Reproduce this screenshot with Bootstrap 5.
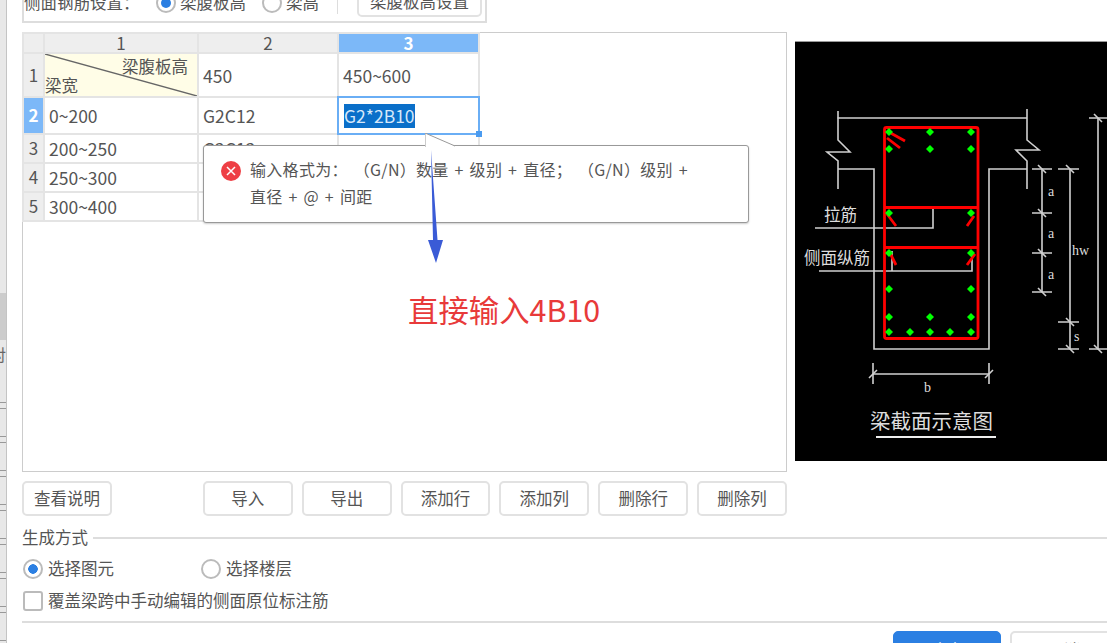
<!DOCTYPE html>
<html lang="zh">
<head>
  <meta charset="UTF-8">
  <title>侧面钢筋设置</title>
  <link rel="stylesheet" href="https://cdn.jsdelivr.net/npm/bootstrap@5.3.0/dist/css/bootstrap.min.css">
  <style>
    html, body { height: 100%; overflow: hidden; background: #fff; }
    body { font-family: "Noto Sans CJK SC", "Noto Sans", sans-serif; font-size: 16.5px; color: #555; line-height: 1.2; }
    .page-shell { width: 1107px; height: 643px; position: relative; overflow: hidden; }

    .side-strip { flex: none; width: 7px; height: 643px; overflow: hidden; border-right: 1px solid #c4c4c4; padding-top: 345px; font-size: 16px; text-indent: -10px; color: #666;
      background:
        linear-gradient(#ccc, #ccc) 0 293px / 100% 47px no-repeat,
        repeating-linear-gradient(transparent 0 27px, #999 27px 28px, transparent 28px 33px, #999 33px 34px) 0 375px / 100% 268px no-repeat,
        #e8e8e8; }
    .dialog-body { flex: none; width: 1100px; padding-left: 15px; }

    .top-bar { width: 465px; height: 23px; border: 2px solid #ddd; border-top: 0; overflow: hidden; align-items: flex-end; padding-bottom: 8px; position: relative; }
    .top-bar .top-label { width: 132px; flex: none; }
    .top-opt { flex: none; white-space: nowrap; }
    .top-sep { flex: none; width: 1px; height: 30px; background: #ddd; margin: 0 0 -1px 18px; }
    .top-btn { flex: none; height: 32px; width: 125px; margin: 0 0 -4px 19px; padding: 0; font-size: 16.5px; color: #555; border: 2px solid #e2e2e2; border-radius: 5px; background: #fff; }

    .main-row { margin-top: 9px; height: 440px; }
    .grid-box { flex: none; width: 765px; height: 440px; border: 1px solid #ccc; }
    .rebar-grid { width: 457px; margin: -1px 0 0 -1px; table-layout: fixed; border-collapse: collapse; font-size: 17.5px; }
    .rebar-grid th, .rebar-grid td { border: 2px solid #e4e4e4; padding: 0 0 0 4px; font-weight: 400; vertical-align: middle; color: #555; white-space: nowrap; overflow: hidden; }
    .rebar-grid thead th { background: #eee; text-align: center; height: 20px; padding: 0; font-size: 17px; line-height: 16px; }
    .rebar-grid tbody th { background: #eee; text-align: center; padding: 0; font-size: 17px; }
    .rebar-grid .is-active { background: #7cb8f8; color: #fff; font-weight: 700; }
    .rebar-grid .row-h { height: 44px; }
    .rebar-grid .row-edit { height: 37px; }
    .rebar-grid .row-n { height: 29px; }
    .corner-cell { position: relative; background: #fffde7; }
    .rebar-grid td.corner-cell { padding: 0; background: #fffde7; }
    .corner-cell svg { position: absolute; inset: 0; width: 100%; height: 100%; }
    .corner-top { position: absolute; right: 9px; top: 2px; font-size: 16.5px; line-height: 20px; }
    .corner-bottom { position: absolute; left: 0; bottom: 1px; font-size: 16.5px; line-height: 20px; }
    .rebar-grid td.edit-cell { padding-left: 5px; position: relative; overflow: visible; outline: 2px solid #6aaef5; outline-offset: -1px; }
    .edit-sel { display: inline-block; background: #0a6fc9; color: #d6e8fa; height: 24px; line-height: 24px; vertical-align: middle; }
    .edit-handle { position: absolute; right: -4px; bottom: -4px; width: 6px; height: 6px; background: #4a9bf0; }

    .diagram { width: 312px; height: 420px; margin: 9px 0 0 8px; background: #000; border-top: 1px solid #999; flex: none; }
    .diagram svg { display: block; width: 312px; height: 420px; }
    .diagram text { font-family: "Noto Sans CJK SC", sans-serif; fill: #ddd; }
    .diagram .dim-label { font-family: "Liberation Serif", serif; font-size: 14px; }

    .btn-row { width: 765px; margin-top: 9px; }
    .tool-btn { width: 90px; height: 35px; padding: 0; font-size: 16.5px; color: #555; background: #fff; border: 2px solid #e2e2e2; border-radius: 5px; }
    .tool-btn.push-gap { margin-left: 91px; }
    .tool-btn.next-btn { margin-left: 9px; }

    .gen-head { margin-top: 12px; height: 20px; }
    .gen-head hr, .end-line { flex: 1; margin: 0; border: 0; border-top: 2px solid #ddd; opacity: 1; }
    .gen-head hr { margin-left: 5px; }
    .opt-row { margin-top: 10px; height: 22px; padding-left: 1px; }
    .opt-row .form-check { margin: 0; padding: 0; min-height: 0; display: flex; align-items: center; gap: 5px; }
    .opt-row .form-check-input { margin: 0; float: none; width: 20px; height: 20px; border: 2px solid #bbb; flex: none; }
    .opt-row .form-check-input:checked[type=radio] { background-color: #fff; border-color: #bbb; background-image: radial-gradient(circle, #2b7fe2 0 4.5px, transparent 5px); }
    .opt-row .form-check-label { font-size: 16.5px; color: #555; }
    .opt-first { width: 178px; }
    .check-row { margin-top: 10px; }
    .check-row .form-check-input { border-radius: 3px; }
    .end-line { margin-top: 9px; height: 0; }
    .foot-btns { margin: 8px 0 0 871px; gap: 9px; }
    .ok-btn, .no-btn { flex: none; width: 108px; height: 34px; padding: 4px 0 0; font-size: 16.5px; border-radius: 5px; }
    .ok-btn { background: #2b7fe2; border-color: #2b7fe2; color: #fff; }
    .no-btn { background: #fff; border: 2px solid #e2e2e2; color: #555; }

    .err-tip { position: absolute; left: 203px; top: 145px; width: 546px; height: 78px; background: #fff; border: 1px solid #999; border-radius: 3px; box-shadow: 0 1px 2px rgba(0,0,0,.2); padding: 11px 40px 0 17px; font-size: 16px; line-height: 27px; }
    .err-icon { flex: none; width: 20px; height: 20px; margin: 4px 9px 0 0; }
    .err-msg { word-spacing: 2px; letter-spacing: .3px; margin-top: -1px; }
    .tip-tail { position: absolute; left: 425px; top: 133px; width: 32px; height: 14px; z-index: 2; }
    .note-arrow { position: absolute; left: 424px; top: 148px; width: 24px; height: 118px; z-index: 3; }
    .note-text { position: absolute; left: 408px; top: 291px; font-size: 30.4px; color: #e83a3a; line-height: 36px; }
  </style>
</head>
<body>
  <div class="page-shell d-flex">
    <div class="side-strip">对</div>
    <div class="dialog-body">
      <!-- 顶部设置条 -->
      <div class="top-bar d-flex">
        <span class="top-label">侧面钢筋设置：</span>
        <div class="top-opt d-flex align-items-center gap-1">
          <svg width="20" height="20" viewBox="0 0 20 20"><circle cx="10" cy="10" r="9" fill="#fff" stroke="#bbb" stroke-width="2"/><circle cx="10" cy="10" r="5" fill="#2b7fe2"/></svg>
          <span>梁腹板高</span>
        </div>
        <div class="top-opt d-flex align-items-center gap-1 ms-3">
          <svg width="20" height="20" viewBox="0 0 20 20"><circle cx="10" cy="10" r="9" fill="#fff" stroke="#bbb" stroke-width="2"/></svg>
          <span>梁高</span>
        </div>
        <span class="top-sep"></span>
        <button type="button" class="btn top-btn">梁腹板高设置</button>
      </div>

      <div class="main-row d-flex">
        <div class="grid-box bg-white">
          <table class="rebar-grid">
            <colgroup><col style="width:21px"><col style="width:154px"><col style="width:140px"><col style="width:141px"></colgroup>
            <thead>
              <tr><th></th><th>1</th><th>2</th><th class="is-active">3</th></tr>
            </thead>
            <tbody>
              <tr class="row-h">
                <th>1</th>
                <td class="corner-cell">
                  <svg viewBox="0 0 154 44" preserveAspectRatio="none"><line x1="0" y1="0" x2="154" y2="44" stroke="#666" stroke-width="1.4"/></svg>
                  <span class="corner-top">梁腹板高</span><span class="corner-bottom">梁宽</span>
                </td>
                <td>450</td>
                <td>450~600</td>
              </tr>
              <tr class="row-edit">
                <th class="is-active">2</th>
                <td>0~200</td>
                <td>G2C12</td>
                <td class="edit-cell"><span class="edit-sel">G2*2B10</span><span class="edit-handle"></span></td>
              </tr>
              <tr class="row-n"><th>3</th><td>200~250</td><td>G2C12</td><td></td></tr>
              <tr class="row-n"><th>4</th><td>250~300</td><td></td><td></td></tr>
              <tr class="row-n"><th>5</th><td>300~400</td><td></td><td></td></tr>
            </tbody>
          </table>
        </div>

        <!-- 截面示意图 -->
        <div class="diagram">
          <svg viewBox="795 41 312 420">
            <g fill="none" stroke="#d0d0d0" stroke-width="1.6">
              <path d="M837.5 117H1027"/>
              <path d="M838 110V139L850 151H827L838 160V188"/>
              <path d="M1027 108V139L1039 149H1016L1027 160V188"/>
              <path d="M838 168H874V348H989V168H1027"/>
              <path d="M815 227H933V206"/>
              <path d="M819 270H972V252M892 250V270"/>
              <path d="M1042 168V291M1032 168H1052M1032 212H1052M1032 252H1052M1032 291H1052"/>
              <path d="M1070 168V348M1058 168H1079M1058 321H1079M1058 348H1079"/>
              <path d="M1098 117V348M1089 117H1107M1089 348H1107"/>
              <path d="M873 373H989M873 362V383M989 362V383"/>
              <path d="M1038 164L1046 172M1038 208L1046 216M1038 248L1046 256M1038 287L1046 295M1066 164L1074 172M1066 317L1074 325M1066 344L1074 352M1094 113L1102 121M1094 344L1102 352M869 377L877 369M985 377L993 369"/>
            </g>
            <path d="M876 436H996" stroke="#eee" stroke-width="2"/>
            <g fill="none" stroke="#f00" stroke-width="2.8">
              <rect x="884.5" y="126.5" width="93.5" height="211" rx="2"/>
              <path d="M884 206.5H978M884 246.5H978"/>
              <path d="M887 130L905 140M887 137L900 147M887 213L896 225M974 215L967 225M890 252L896 264M975 253L967 264"/>
            </g>
            <g fill="#0f0" id="bar-dots"></g>
            <text x="824" y="220" font-size="16.5">拉筋</text>
            <text x="804" y="263" font-size="16.5">侧面纵筋</text>
            <text x="870" y="428" font-size="20.5">梁截面示意图</text>
            <text class="dim-label" x="1048" y="195">a</text>
            <text class="dim-label" x="1048" y="237">a</text>
            <text class="dim-label" x="1048" y="278">a</text>
            <text class="dim-label" x="1072" y="254">hw</text>
            <text class="dim-label" x="1074" y="340">s</text>
            <text class="dim-label" x="924" y="391">b</text>
          </svg>
        </div>
      </div>

      <div class="btn-row d-flex">
        <button type="button" class="btn tool-btn">查看说明</button>
        <button type="button" class="btn tool-btn push-gap">导入</button>
        <button type="button" class="btn tool-btn next-btn">导出</button>
        <button type="button" class="btn tool-btn next-btn">添加行</button>
        <button type="button" class="btn tool-btn next-btn">添加列</button>
        <button type="button" class="btn tool-btn next-btn">删除行</button>
        <button type="button" class="btn tool-btn next-btn">删除列</button>
      </div>

      <!-- 生成方式 -->
      <div class="gen-head d-flex align-items-center"><span>生成方式</span><hr></div>
      <div class="opt-row d-flex align-items-center">
        <div class="form-check opt-first">
          <input class="form-check-input" type="radio" name="genMode" id="pickEl" checked>
          <label class="form-check-label" for="pickEl">选择图元</label>
        </div>
        <div class="form-check">
          <input class="form-check-input" type="radio" name="genMode" id="pickFloor">
          <label class="form-check-label" for="pickFloor">选择楼层</label>
        </div>
      </div>
      <div class="opt-row check-row d-flex align-items-center">
        <div class="form-check">
          <input class="form-check-input" type="checkbox" id="overrideMark">
          <label class="form-check-label" for="overrideMark">覆盖梁跨中手动编辑的侧面原位标注筋</label>
        </div>
      </div>
      <div class="end-line"></div>
      <div class="foot-btns d-flex">
        <button type="button" class="btn ok-btn">确定</button>
        <button type="button" class="btn no-btn">取消</button>
      </div>
    </div>

    <!-- 错误提示和标注 -->
    <svg class="tip-tail" viewBox="0 0 32 14"><path d="M0 14V0L30 13" fill="#fff" stroke="#999"/></svg>
    <div class="err-tip d-flex">
      <svg class="err-icon" viewBox="0 0 20 20"><circle cx="10" cy="10" r="10" fill="#ee3f45"/><path d="M6 6L14 14M14 6L6 14" stroke="#fff" stroke-width="1.5"/></svg>
      <div class="err-msg">输入格式为： （G/N）数量 + 级别 + 直径；&nbsp;（G/N）级别 + 直径 + @ + 间距</div>
    </div>
    <svg class="note-arrow" viewBox="424 148 24 118"><path d="M431 150L433 240H428L436 263L443 240H437.5Z" fill="#3a5bd6"/></svg>
    <div class="note-text">直接输入4B10</div>
  </div>

  <script>
    // 钢筋点位
    const barDots = [[889,131],[930,131],[971,131],[889,148],[930,148],[971,148],[889,212],[971,212],[889,252],[971,252],[889,288],[971,288],[889,316],[930,316],[971,316],[889,331],[910,331],[930,331],[950,331],[971,331]];
    const dotGroup = document.getElementById('bar-dots');
    barDots.forEach(([x, y]) => {
      dotGroup.insertAdjacentHTML('beforeend', `<path d="M${x} ${y - 4}L${x + 4} ${y}L${x} ${y + 4}L${x - 4} ${y}Z"/>`);
    });
    dotGroup.innerHTML = dotGroup.innerHTML;
  </script>
</body>
</html>
